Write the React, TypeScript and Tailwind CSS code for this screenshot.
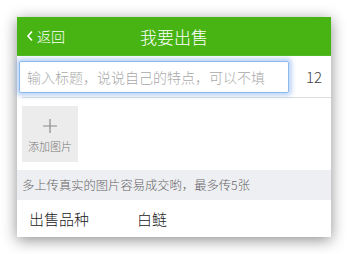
import React from 'react';

const App: React.FC = () => {
  return (
    <div
      className="w-[347px] h-[254px] bg-white pt-[17px] pl-[17px] font-light"
      style={{ fontFamily: '"Noto Sans CJK SC", "Noto Sans", sans-serif' }}
    >
      <div className="w-[314px] bg-white shadow-[0_3px_14px_rgba(0,0,0,0.45)]">
        {/* header */}
        <div className="relative h-[39px] bg-[#48b414] flex items-center border-b border-[#52b825]">
          <div className="flex items-center pl-[9px] text-white text-[14px] leading-none">
            <svg width="8" height="12" viewBox="0 0 8 12" className="mr-[3px]">
              <path d="M6 1.5 L2 6 L6 10.5" fill="none" stroke="white" strokeWidth="1.6" />
            </svg>
            返回
          </div>
          <div className="absolute left-0 right-0 text-center text-white text-[17px] leading-none pointer-events-none">
            我要出售
          </div>
        </div>

        {/* title input */}
        <div className="flex items-center h-[41px] pr-[9px]">
          <div className="ml-[2px] w-[270px] h-[32px] rounded-[2px] border border-[#8db8f0] shadow-[0_0_4px_3px_rgba(130,175,240,0.5)] flex items-center pl-[7px]">
            <span className="text-[14px] text-[#a9a9a9] leading-none">输入标题，说说自己的特点，可以不填</span>
          </div>
          <span className="ml-auto text-[15px] text-[#444] leading-none">12</span>
        </div>
        <div className="ml-[5px] h-px bg-[#dcdcdc]" />

        {/* add image */}
        <div className="pl-[5px] pt-[8px] pb-[8px]">
          <div className="w-[56px] h-[56px] bg-[#ececec] flex flex-col items-center justify-center">
            <svg width="14" height="14" viewBox="0 0 14 14" className="mt-[2px]">
              <path d="M7 0 V14 M0 7 H14" stroke="#8a8a8a" strokeWidth="1.2" />
            </svg>
            <span className="mt-[8px] text-[11px] text-[#777] leading-none">添加图片</span>
          </div>
        </div>

        {/* tip */}
        <div className="h-[30px] bg-[#eeeff3] flex items-center pl-[5px]">
          <span className="text-[12.3px] text-[#666] leading-none">多上传真实的图片容易成交哟，最多传5张</span>
        </div>

        {/* breed */}
        <div className="h-[37px] flex items-center pl-[12px]">
          <span className="w-[108px] text-[15px] text-[#222] leading-none">出售品种</span>
          <span className="text-[15px] text-[#222] leading-none">白鲢</span>
        </div>
      </div>
    </div>
  );
};

export default App;
